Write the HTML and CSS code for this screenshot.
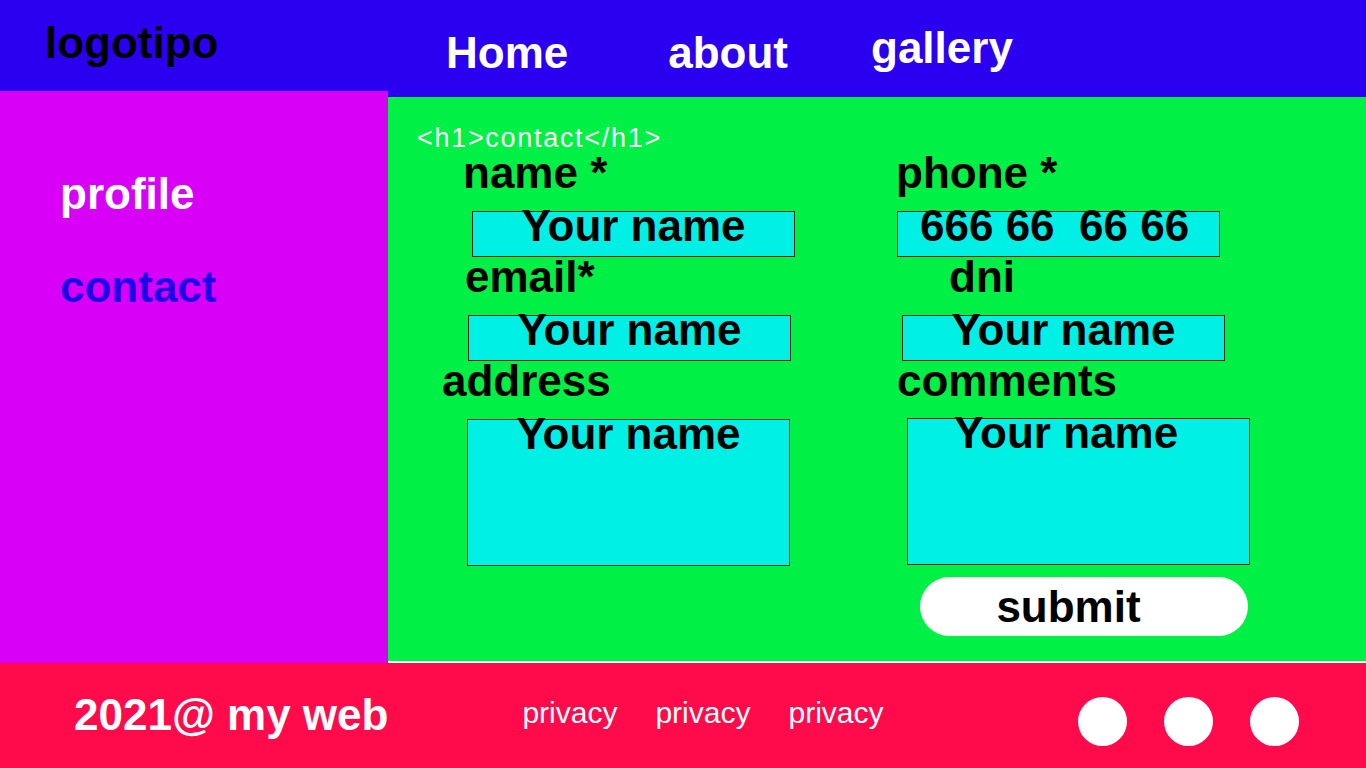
FILE: index.html
```html
<!DOCTYPE html>
<html lang="es">
<head>
<meta charset="utf-8">
<title>contact</title>
<link rel="stylesheet" href="styles.css">
</head>
<body>
<div class="page">
  <div class="top">
    <aside class="left">
      <div class="logo">logotipo</div>
      <nav class="side">
        <a href="#" class="side-link">profile</a>
        <a href="#" class="side-link current">contact</a>
      </nav>
    </aside>
    <div class="right">
      <nav class="nav">
        <a href="#" class="nav-link">Home</a>
        <a href="#" class="nav-link about">about</a>
        <a href="#" class="nav-link gallery">gallery</a>
      </nav>
      <main class="main">
        <h1 class="heading">&lt;h1&gt;contact&lt;/h1&gt;</h1>
        <form class="form">
          <div class="col">
            <div class="group">
              <label class="label l-name">name *</label>
              <div class="box b-name">Your name</div>
            </div>
            <div class="group">
              <label class="label l-email">email*</label>
              <div class="box b-email">Your name</div>
            </div>
            <div class="group">
              <label class="label">address</label>
              <div class="box area b-address">Your name</div>
            </div>
          </div>
          <div class="col">
            <div class="group">
              <label class="label">phone *</label>
              <div class="box b-phone">666 66  66 66</div>
            </div>
            <div class="group">
              <label class="label l-dni">dni</label>
              <div class="box b-dni">Your name</div>
            </div>
            <div class="group">
              <label class="label l-comments">comments</label>
              <div class="box area b-comments">Your name</div>
            </div>
            <button type="button" class="submit">submit</button>
          </div>
        </form>
      </main>
    </div>
  </div>
  <footer class="footer">
    <div class="brand">2021@ my web</div>
    <div class="links">
      <a href="#" class="link">privacy</a>
      <a href="#" class="link">privacy</a>
      <a href="#" class="link">privacy</a>
    </div>
    <div class="socials">
      <span class="dot"></span>
      <span class="dot"></span>
      <span class="dot"></span>
    </div>
  </footer>
</div>
</body>
</html>
```
FILE: styles.css
```css
* { box-sizing: border-box; }
html, body { margin: 0; padding: 0; }
body {
  width: 1366px;
  height: 768px;
  overflow: hidden;
  font-family: "Liberation Sans", Arial, sans-serif;
}
.page { display: flex; flex-direction: column; height: 768px; }
.top { display: grid; grid-template-columns: 388px 1fr; height: 663px; }

.left { display: flex; flex-direction: column; }
.logo {
  height: 91px;
  background: #2b00f0;
  padding: 21px 0 0 45px;
  font: 700 44px/44px "Liberation Sans", Arial, sans-serif;
  color: #000;
}
.side {
  flex: 1;
  background: #d800f6;
  padding: 81px 0 0 60px;
  display: flex;
  flex-direction: column;
  align-items: flex-start;
  gap: 49px;
}
.side-link {
  font: 700 44px/44px "Liberation Sans", Arial, sans-serif;
  color: #fff;
  text-decoration: none;
}
.side-link.current { color: #1e00e8; }

.right { display: flex; flex-direction: column; }
.nav {
  height: 97px;
  background: #2b00f0;
  display: flex;
  align-items: flex-start;
  padding: 31px 0 0 58px;
}
.nav-link {
  font: 700 44px/44px "Liberation Sans", Arial, sans-serif;
  color: #fff;
  text-decoration: none;
}
.nav-link.about { margin-left: 100px; }
.nav-link.gallery { margin-left: 83px; margin-top: -5px; }

.main {
  flex: 1;
  background: #00f046;
  border-bottom: 2px solid #fff;
  padding: 26px 0 0 29px;
}
.heading {
  margin: 0;
  font: 400 27px/30px "Liberation Sans", Arial, sans-serif;
  letter-spacing: 1.7px;
  color: #fff;
}
.form {
  display: grid;
  grid-template-columns: 454px 1fr;
  margin: 2px 0 0 25px;
}
.col { display: flex; flex-direction: column; align-items: flex-start; gap: 2px; }
.group { display: flex; flex-direction: column; align-items: flex-start; }
.label {
  font: 700 44px/36px "Liberation Sans", Arial, sans-serif;
  color: #000;
  margin-bottom: 20px;
}
.l-name { margin-left: 21px; }
.l-email { margin-left: 23px; }
.l-dni { margin-left: 53px; }
.l-comments { margin-left: 1px; }

.box {
  width: 323px;
  height: 46px;
  background: #00f0e6;
  border: 1px solid #0d2a10;
  font: 700 44px/28px "Liberation Sans", Arial, sans-serif;
  color: #000;
  text-align: center;
  white-space: pre;
}
.box.area { height: 147px; }
.b-name { margin-left: 30px; }
.b-email { margin-left: 26px; }
.b-address { margin-left: 25px; }
.b-phone { margin-left: 1px; text-align: left; padding-left: 22px; }
.b-dni { margin-left: 6px; }
.b-comments {
  margin-left: 11px;
  margin-top: -1px;
  width: 343px;
  height: 145px;
  text-align: left;
  padding-left: 46px;
}
.submit {
  margin: 10px 0 0 24px;
  width: 328px;
  height: 59px;
  border: none;
  border-radius: 30px;
  background: #fff;
  padding: 0 31px 0 0;
  font: 700 44px/59px "Liberation Sans", Arial, sans-serif;
  color: #000;
  cursor: pointer;
}

.footer {
  height: 105px;
  background: #ff0a4a;
  display: flex;
  align-items: flex-start;
  padding: 0 67px 0 74px;
}
.brand {
  margin-top: 30px;
  font: 700 44px/44px "Liberation Sans", Arial, sans-serif;
  color: #fff;
}
.links {
  margin: 35px 0 0 134px;
  display: flex;
  gap: 38px;
}
.link {
  font: 400 30px/30px "Liberation Sans", Arial, sans-serif;
  color: #fff;
  text-decoration: none;
}
.socials {
  margin: 34px 0 0 auto;
  display: flex;
  gap: 37px;
}
.dot {
  width: 49px;
  height: 49px;
  border-radius: 50%;
  background: #fff;
}
```
